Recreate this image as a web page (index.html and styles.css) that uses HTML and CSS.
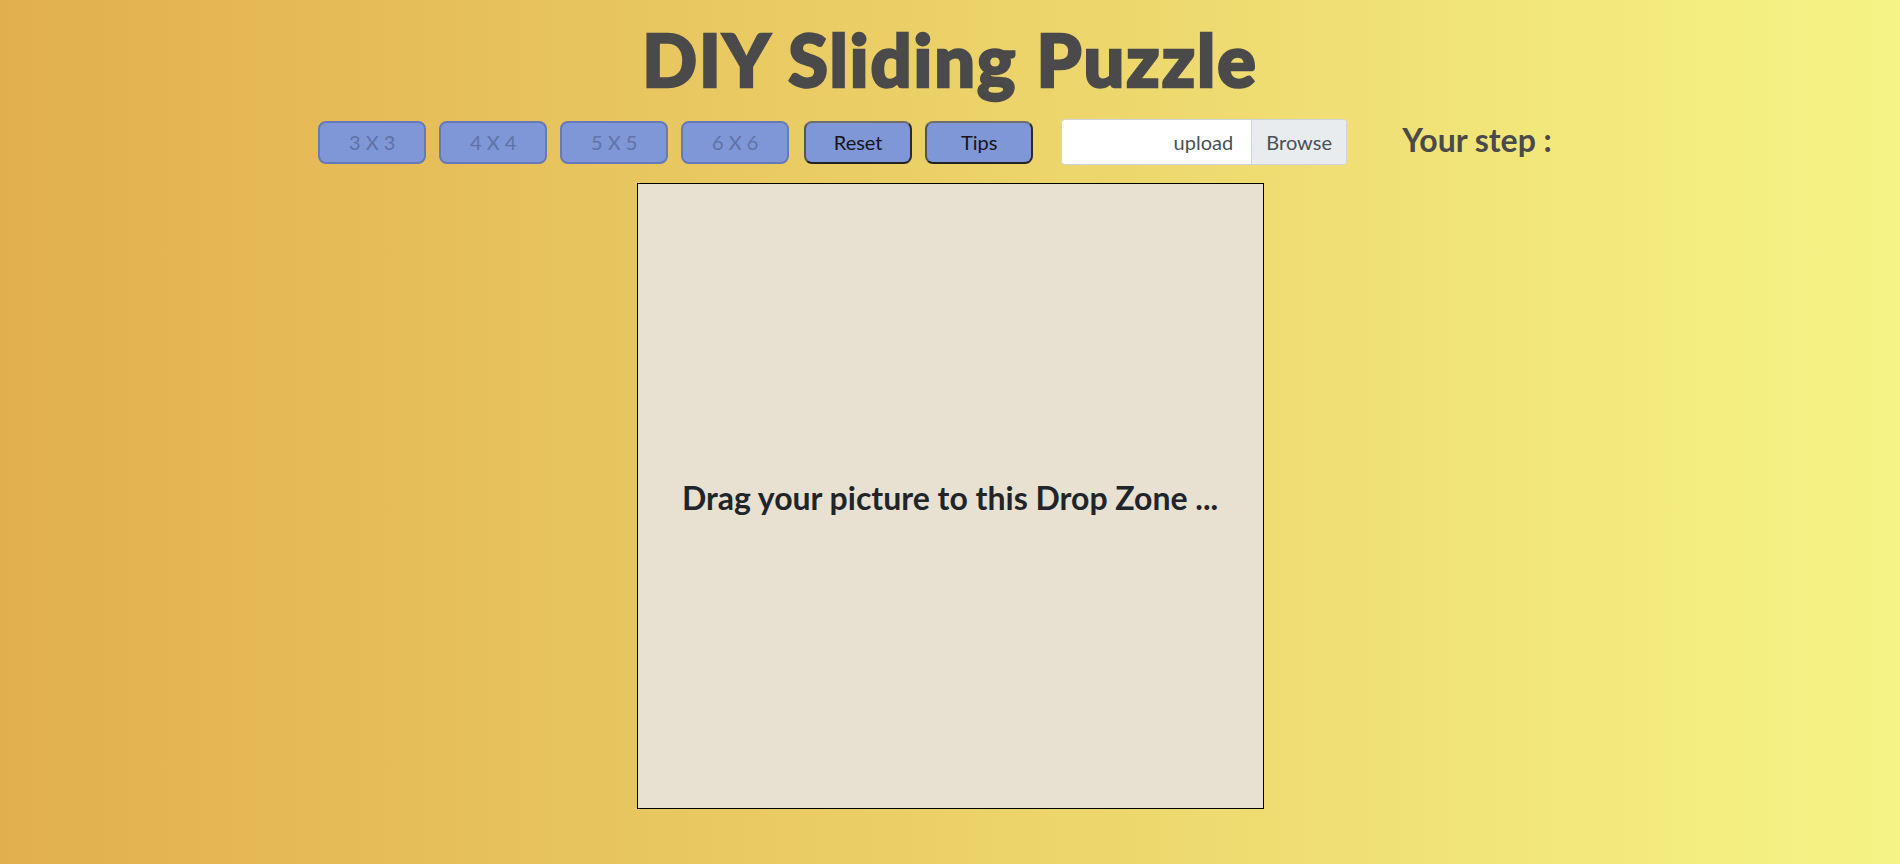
FILE: index.html
```html
<!DOCTYPE html>
<html lang="en">
<head>
<meta charset="utf-8">
<title>DIY Sliding Puzzle</title>
<link rel="stylesheet" href="styles.css">
</head>
<body>
  <main class="page">
    <h1 class="title">DIY Sliding Puzzle</h1>
    <div class="toolbar">
      <div class="btn-group">
        <button class="btn" disabled>3 X 3</button>
        <button class="btn" disabled>4 X 4</button>
        <button class="btn" disabled>5 X 5</button>
        <button class="btn" disabled>6 X 6</button>
        <button class="btn btn-active btn-reset">Reset</button>
        <button class="btn btn-active">Tips</button>
      </div>
      <label class="file-input">
        <span class="file-label">upload</span>
        <span class="file-browse">Browse</span>
      </label>
      <div class="step">Your step :<span class="step-count"></span></div>
    </div>
    <section class="drop-zone">
      <p class="drop-text">Drag your picture to this Drop Zone ...</p>
    </section>
  </main>
</body>
</html>
```

FILE: styles.css
```css
html, body {
  margin: 0;
  padding: 0;
}

body {
  width: 1900px;
  height: 864px;
  overflow: hidden;
  background: linear-gradient(to right, #e2af4e 0%, #ebd168 50%, #f6f486 100%);
  font-family: Lato, "Open Sans", sans-serif;
}

.page {
  display: flex;
  flex-direction: column;
  align-items: center;
  padding-top: 23px;
}

.title {
  margin: 0;
  font-size: 72px;
  line-height: 72px;
  font-weight: 900;
  letter-spacing: 2px;
  color: #4a4a4a;
  -webkit-text-stroke: 2.5px #4a4a4a;
}

.toolbar {
  margin-top: 24px;
  display: flex;
  align-items: center;
  height: 46px;
  padding-right: 30px;
}

.btn-group {
  display: flex;
  gap: 13px;
}

.btn {
  width: 108px;
  height: 43px;
  border-radius: 8px;
  background: #7f96d7;
  font-family: Lato, "Open Sans", sans-serif;
  font-size: 20px;
  padding: 0;
  color: #5f73a6;
  border: 2px solid #6679b8;
}

.btn-active {
  color: #151515;
  border-color: #6e6e6e #2a2a2a #222 #555;
}

.btn-reset {
  margin-left: 2px;
}

.file-input {
  margin-left: 28px;
  width: 286px;
  height: 46px;
  box-sizing: border-box;
  border: 1px solid #ced4da;
  border-radius: 4px;
  background: #fff;
  display: flex;
  overflow: hidden;
  font-size: 20px;
  color: #495057;
}

.file-label {
  flex: 1;
  display: flex;
  align-items: center;
  justify-content: flex-end;
  padding-right: 18px;
}

.file-browse {
  width: 94px;
  background: #e9ecef;
  border-left: 1px solid #ced4da;
  display: flex;
  align-items: center;
  justify-content: center;
}

.step {
  margin-left: 55px;
  margin-bottom: 6px;
  font-size: 32px;
  font-weight: 700;
  color: #4a4a4a;
  display: flex;
  align-items: center;
}

.step-count {
  display: inline-block;
  min-width: 0;
}

.drop-zone {
  margin-top: 18px;
  width: 625px;
  height: 624px;
  border: 1px solid #000;
  background: #e8e1d2;
  display: flex;
  align-items: center;
  justify-content: center;
}

.drop-text {
  margin: 2px 0 0 0;
  font-size: 32px;
  font-weight: 700;
  color: #212529;
}
```
